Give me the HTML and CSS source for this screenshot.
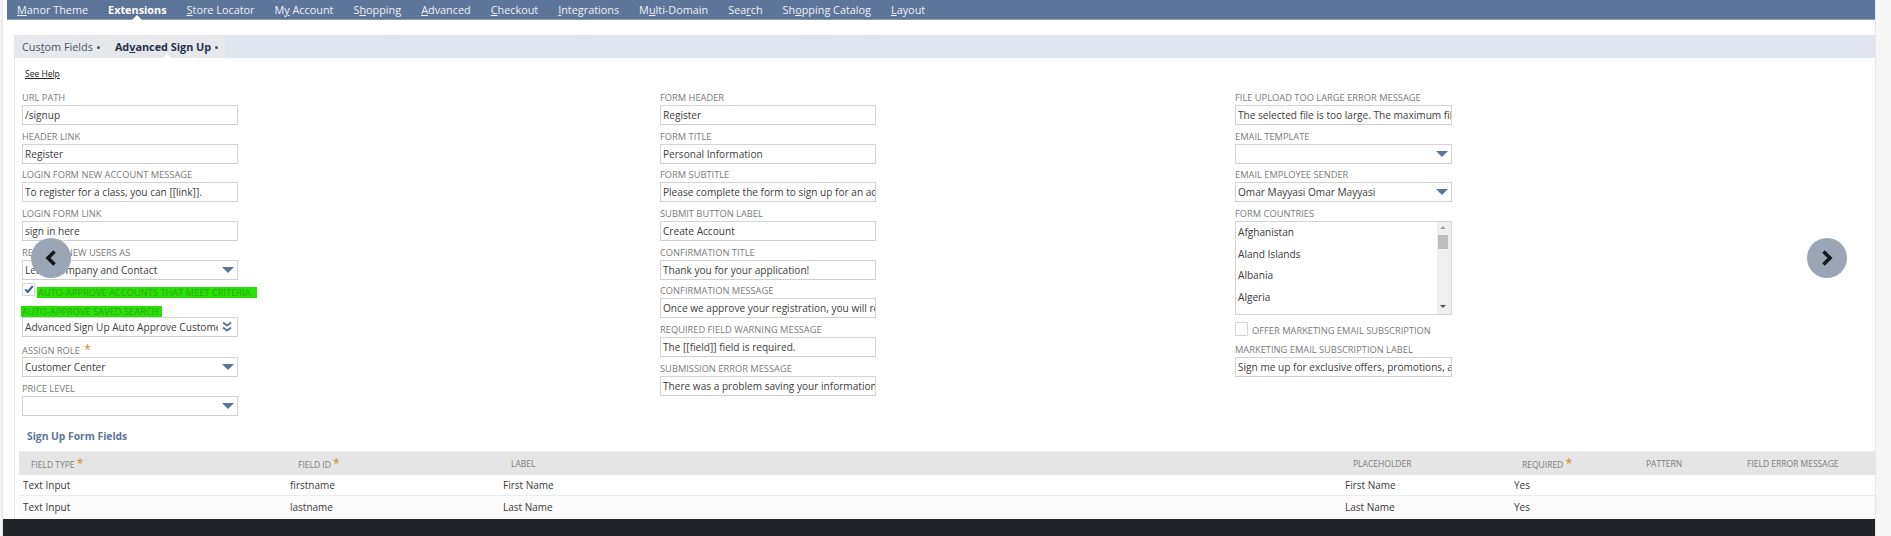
FILE: index.html
```html
<!DOCTYPE html>
<html lang="en">
<head>
<meta charset="utf-8">
<title>Advanced Sign Up</title>
<link rel="stylesheet" href="styles.css">
</head>
<body>
<div class="rail"></div>
<div class="page">
  <nav class="topnav">
    <span class="nav-item"><u>M</u>anor Theme</span>
    <span class="nav-item active">Extensions</span>
    <span class="nav-item"><u>S</u>tore Locator</span>
    <span class="nav-item">M<u>y</u> Account</span>
    <span class="nav-item">S<u>h</u>opping</span>
    <span class="nav-item"><u>A</u>dvanced</span>
    <span class="nav-item"><u>C</u>heckout</span>
    <span class="nav-item"><u>I</u>ntegrations</span>
    <span class="nav-item">M<u>u</u>lti-Domain</span>
    <span class="nav-item">Sea<u>r</u>ch</span>
    <span class="nav-item">Sh<u>o</u>pping Catalog</span>
    <span class="nav-item"><u>L</u>ayout</span>
  </nav>
  <main class="panel">
    <div class="subtabs">
      <div class="subtab-group">
        <span class="subtab">Cus<u>t</u>om Fields<i class="dot"></i></span>
        <span class="subtab active">Ad<u>v</u>anced Sign Up<i class="dot"></i></span>
      </div>
    </div>
    <a class="help">See Help</a>
    <div class="columns">
      <section class="col">
        <div class="field"><label class="lbl">URL Path</label><div class="box">/signup</div></div>
        <div class="field"><label class="lbl">Header Link</label><div class="box">Register</div></div>
        <div class="field"><label class="lbl">Login Form New Account Message</label><div class="box">To register for a class, you can [[link]].</div></div>
        <div class="field"><label class="lbl">Login Form Link</label><div class="box">sign in here</div></div>
        <div class="field"><label class="lbl">Register New Users As</label><div class="box select">Lead, Company and Contact<i class="caret"></i></div></div>
        <div class="check-row checked-row">
          <span class="check"><svg viewBox="0 0 12 12" width="10" height="10"><path d="M1.5 6.500 4.500 9.500 10.500 2.500" fill="none" stroke="#2f5d9e" stroke-width="2.400"/></svg></span>
          <span class="lbl hl approve-lbl">Auto-approve accounts that meet criteria</span>
        </div>
        <div class="field search-field"><label class="lbl hl search-lbl">Auto-approve saved search</label><div class="box select">Advanced Sign Up Auto Approve Customers
          <svg class="dbl" viewBox="0 0 12 12" width="12" height="12"><path d="M2 1.500 6 4.500 10 1.500M2 6.500 6 9.500 10 6.500" fill="none" stroke="#5d7599" stroke-width="2"/></svg></div></div>
        <div class="field"><label class="lbl">Assign Role <b class="star big">*</b></label><div class="box select">Customer Center<i class="caret"></i></div></div>
        <div class="field"><label class="lbl">Price Level</label><div class="box select"><i class="caret"></i></div></div>
      </section>
      <section class="col">
        <div class="field"><label class="lbl">Form Header</label><div class="box">Register</div></div>
        <div class="field"><label class="lbl">Form Title</label><div class="box">Personal Information</div></div>
        <div class="field"><label class="lbl">Form Subtitle</label><div class="box">Please complete the form to sign up for an account</div></div>
        <div class="field"><label class="lbl">Submit Button Label</label><div class="box">Create Account</div></div>
        <div class="field"><label class="lbl">Confirmation Title</label><div class="box">Thank you for your application!</div></div>
        <div class="field"><label class="lbl">Confirmation Message</label><div class="box">Once we approve your registration, you will receive</div></div>
        <div class="field"><label class="lbl">Required Field Warning Message</label><div class="box">The [[field]] field is required.</div></div>
        <div class="field"><label class="lbl">Submission Error Message</label><div class="box">There was a problem saving your information</div></div>
      </section>
      <section class="col">
        <div class="field"><label class="lbl">File Upload Too Large Error Message</label><div class="box">The selected file is too large. The maximum file size</div></div>
        <div class="field"><label class="lbl">Email Template</label><div class="box select"><i class="caret"></i></div></div>
        <div class="field"><label class="lbl">Email Employee Sender</label><div class="box select">Omar Mayyasi Omar Mayyasi<i class="caret"></i></div></div>
        <div class="field list-field">
          <label class="lbl">Form Countries</label>
          <div class="listbox">
            <ul class="options">
              <li>Afghanistan</li>
              <li>Aland Islands</li>
              <li>Albania</li>
              <li>Algeria</li>
            </ul>
            <div class="scroll">
              <i class="sc-up"></i>
              <i class="sc-thumb"></i>
              <i class="sc-down"></i>
            </div>
          </div>
        </div>
        <div class="check-row offer-row">
          <span class="check"></span>
          <span class="lbl">Offer Marketing Email Subscription</span>
        </div>
        <div class="field"><label class="lbl">Marketing Email Subscription Label</label><div class="box">Sign me up for exclusive offers, promotions, and news</div></div>
      </section>
    </div>
    <h2 class="section-title">Sign Up Form Fields</h2>
    <div class="table">
      <div class="tr head">
        <div>Field Type <b class="star">*</b></div>
        <div>Field ID <b class="star">*</b></div>
        <div>Label</div>
        <div>Placeholder</div>
        <div>Required <b class="star">*</b></div>
        <div>Pattern</div>
        <div>Field Error Message</div>
      </div>
      <div class="tr">
        <div>Text Input</div><div>firstname</div><div>First Name</div><div>First Name</div><div>Yes</div><div></div><div></div>
      </div>
      <div class="tr alt">
        <div>Text Input</div><div>lastname</div><div>Last Name</div><div>Last Name</div><div>Yes</div><div></div><div></div>
      </div>
    </div>
  </main>
</div>
<div class="gutter"></div>
<div class="footer-bar"></div>
<button class="carousel prev" aria-label="Previous"><svg viewBox="0 0 16 16" width="16" height="16"><path d="M11.500 1.500 5 8 11.500 14.500" fill="none" stroke="#14181f" stroke-width="3.600"/></svg></button>
<button class="carousel next" aria-label="Next"><svg viewBox="0 0 16 16" width="16" height="16"><path d="M4.500 1.500 11 8 4.500 14.500" fill="none" stroke="#14181f" stroke-width="3.600"/></svg></button>
</body>
</html>
```
FILE: styles.css
```css
* { box-sizing: border-box; }
html, body { margin: 0; height: 536px; overflow: hidden; background: #fff; }
body {
  display: flex;
  font-family: "Open Sans", "Liberation Sans", sans-serif;
  font-size: 10px;
  color: #3a3a3a;
}
.rail { width: 3px; flex: none; background: #f3f3f3; border-right: 1px solid #e4e4e4; }
.page { width: 1872px; flex: none; padding-left: 4px; }
.gutter { flex: 1; background: #f6f6f6; border-left: 1px solid #e6e6e6; }

.topnav {
  height: 20px;
  display: flex;
  align-items: center;
  gap: 20px;
  padding: 0 0 1px 10px;
  background: #5d7599;
  border-bottom: 1px solid #8a9bb5;
  color: #eef1f6;
  font-size: 10.850px;
  white-space: nowrap;
}
.nav-item { position: relative; line-height: 19px; }
.nav-item.active { font-weight: 700; color: #fff; }
.nav-item.active::after, .subtab.active::after {
  content: "";
  position: absolute;
  left: 50%;
  bottom: -1px;
  margin-left: -5px;
  border: 5px solid transparent;
  border-top: 0;
  border-bottom-color: #fff;
}

.panel {
  margin: 15px 0 0 7px;
  height: 484px;
  border-left: 1px solid #e3e7ed;
  overflow: hidden;
}
.subtabs { height: 23px; background: #dfe5ef; display: flex; }
.subtab-group { display: flex; align-items: center; gap: 15px; padding: 0 6px 0 7px; background: #e6e8ec; width: 210px; font-size: 10.850px; white-space: nowrap; }
.subtab { position: relative; line-height: 23px; color: #4a5568; }
.subtab.active { font-weight: 700; color: #27324a; }
.dot { display: inline-block; width: 3px; height: 3px; margin-left: 4px; vertical-align: 2px; background: #4a5568; border-radius: 50%; }

.help {
  display: block;
  margin: 10px 0 0 10px;
  font-size: 8.500px;
  line-height: 12px;
  color: #222;
  text-decoration: underline;
}
.columns {
  display: grid;
  grid-template-columns: 638px 575px 217px;
  margin: 11px 0 0 7px;
  justify-content: start;
}
.col { width: 216px; }
.col:nth-child(3) { width: 217px; }
.field { display: flex; flex-direction: column; height: 38.700px; }
.lbl {
  display: block;
  height: 14px;
  font-size: 9.300px;
  line-height: 14px;
  text-transform: uppercase;
  color: #7a7a7a;
  white-space: nowrap;
}
.box {
  position: relative;
  height: 20px;
  flex: none;
  padding: 0 2px;
  border: 1px solid #d4d4d4;
  border-bottom-color: #cfcfcf;
  background: #fff;
  font-size: 10.100px;
  line-height: 18px;
  color: #3d3d3d;
  white-space: nowrap;
  overflow: hidden;
}
.select { padding-right: 22px; }
.caret {
  position: absolute;
  right: 3px;
  top: 6px;
  border: 6px solid transparent;
  border-top: 6px solid #5d7599;
  border-bottom: 0;
  width: 0;
  height: 0;
  box-sizing: content-box;
}
.dbl { position: absolute; right: 4px; top: 3px; background: #fff; box-shadow: -3px 0 0 #fff; }
.star { color: #c98a2b; font-size: 12px; font-weight: 400; }
.star.big { margin-left: 2px; }

.check-row { display: flex; align-items: flex-start; }
.checked-row { height: 14px; margin-top: -1.500px; }
.check {
  width: 13px;
  height: 13px;
  flex: none;
  border: 1px solid #d4d4d4;
  background: #fff;
  display: flex;
  align-items: center;
  justify-content: center;
  border-radius: 1px;
}
.hl { background: #25e400; color: #3f9a2a; }
.approve-lbl { width: 220px; margin: 4px 0 0 2px; padding-left: 1px; height: 11px; line-height: 11px; flex: none; }
.search-field { height: 37px; margin-top: 9.500px; }
.search-lbl { width: 141px; margin-left: -1px; padding-left: 1px; height: 11px; line-height: 11px; flex: none; }
.search-field + .field { margin-top: 0; }

.list-field { height: 108px; }
.listbox {
  height: 94px;
  flex: none;
  display: flex;
  border: 1px solid #d4d4d4;
  background: #fff;
}
.options { list-style: none; margin: 0; padding: 0 0 0 2px; flex: 1; overflow: hidden; font-size: 10.100px; }
.options li { height: 21.700px; line-height: 21.700px; }
.scroll { width: 14px; flex: none; background: #f0f0f0; position: relative; }
.sc-up, .sc-down { position: absolute; left: 3px; width: 0; height: 0; border: 3px solid transparent; box-sizing: content-box; }
.sc-up { top: 4px; border-top: 0; border-bottom: 3px solid #a0a0a0; }
.sc-down { bottom: 6px; border-bottom: 0; border-top: 3px solid #505050; }
.sc-thumb { position: absolute; left: 1px; right: 3px; top: 13px; height: 14px; background: #bdbdbd; }
.offer-row { height: 14px; margin-top: 7px; gap: 4px; }
.offer-row .check { height: 14px; }
.offer-row .lbl { margin-top: 2px; }
.offer-row + .field { margin-top: 7px; }

.section-title {
  margin: 8px 0 0 12px;
  font-size: 10.300px;
  line-height: 14px;
  font-weight: 700;
  color: #5d7599;
}
.table { margin: 8px 0 0 4px; }
.tr {
  display: grid;
  grid-template-columns: 267px 213px 842px 169px 124px 101px 140px;
  height: 21px;
  align-items: center;
  border-bottom: 1px solid #ececec;
  font-size: 10px;
}
.tr > div { padding-left: 4px; white-space: nowrap; }
.tr.alt { background: #fbfbfb; border-bottom: 0; height: 23px; }
.head {
  height: 24px;
  background: #e5e5e5;
  border-top: 1px solid #eeeeee;
  border-bottom: 0;
  font-size: 8.500px;
  color: #7d7d7d;
  text-transform: uppercase;
}
.tr.head > div { padding-left: 12px; }

.footer-bar {
  position: absolute;
  left: 3px;
  top: 519px;
  width: 1872px;
  height: 17px;
  background: #212529;
}
.carousel {
  position: absolute;
  top: 238px;
  width: 40px;
  height: 40px;
  padding: 0;
  border: 0;
  border-radius: 50%;
  background: #9aa6b6;
  display: flex;
  align-items: center;
  justify-content: center;
}
.prev { left: 31px; }
.next { left: 1807px; }
```
